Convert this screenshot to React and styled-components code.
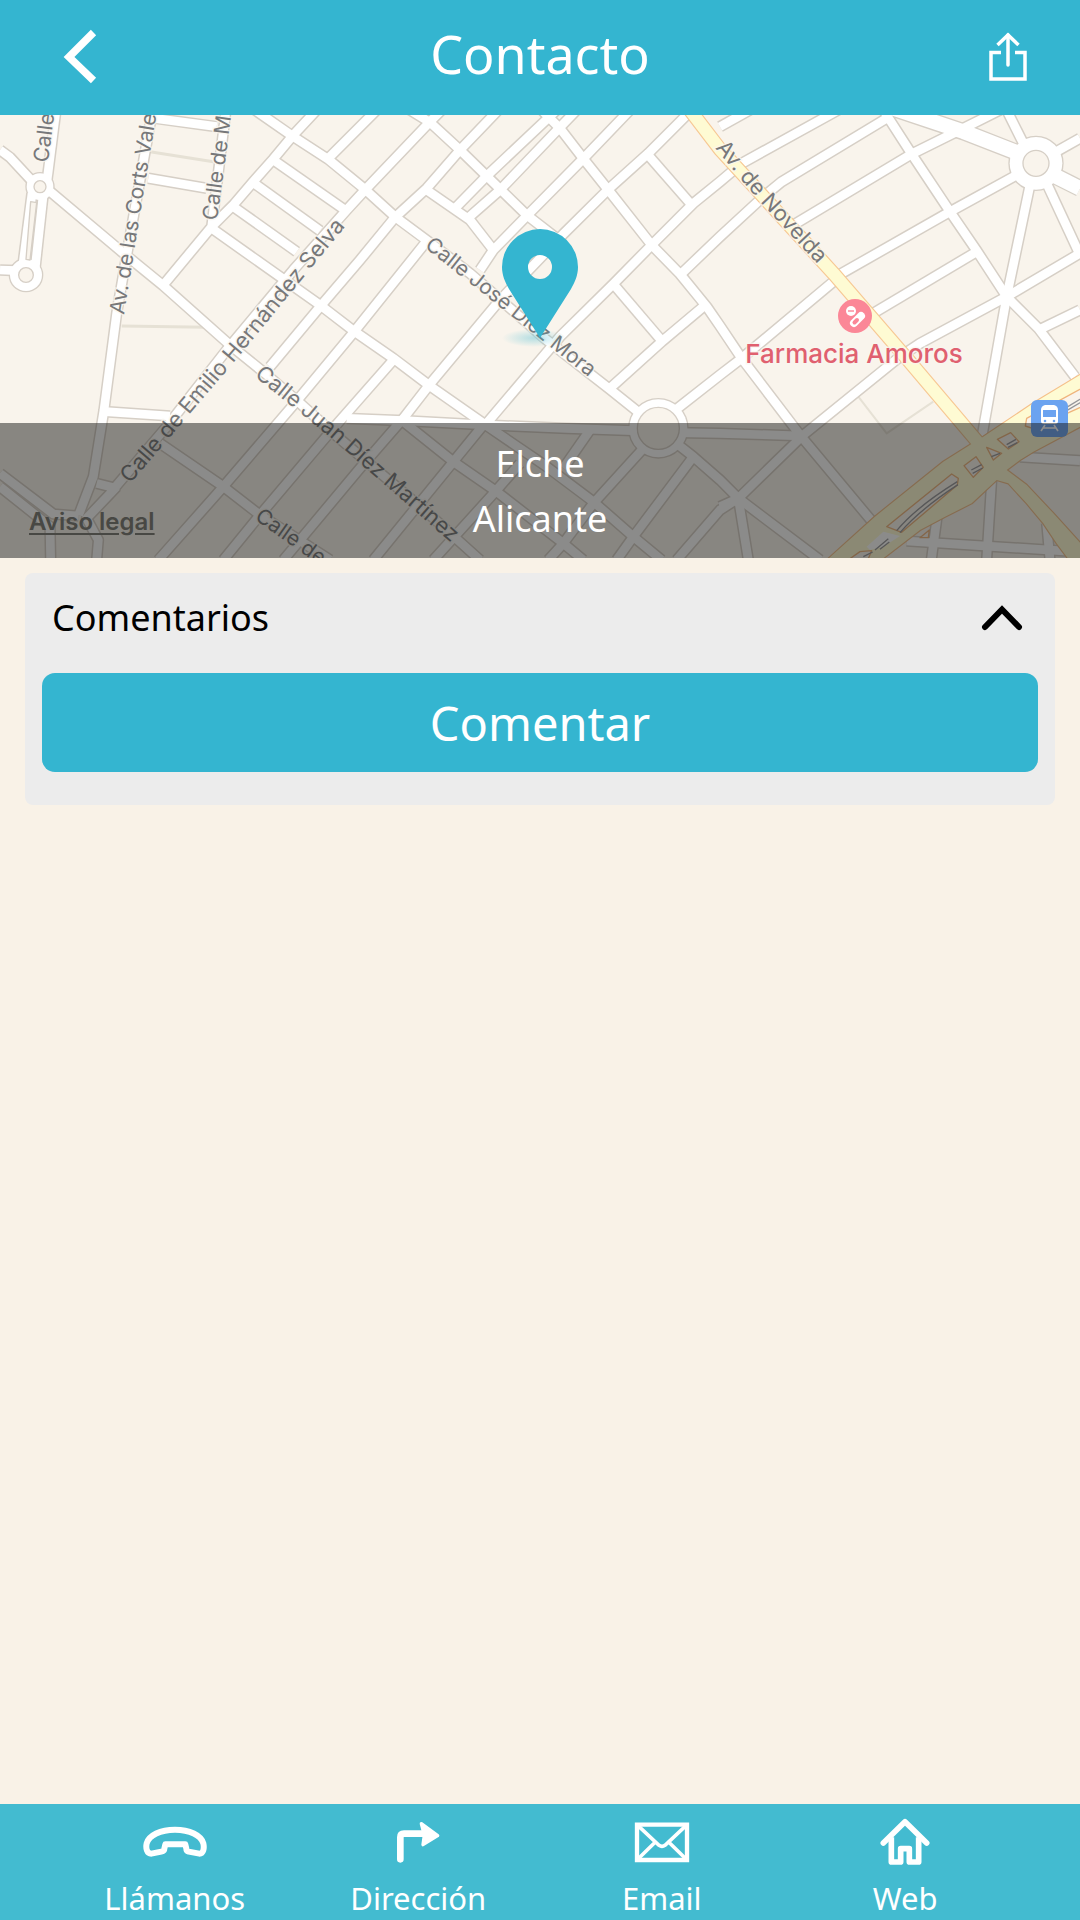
import React, { useState } from 'react';
import styled, { createGlobalStyle } from 'styled-components';

const TEAL = '#34b5d0';
const SANS = '"Noto Sans", "Open Sans", sans-serif';
const MAP_SANS = 'Inter, Roboto, sans-serif';

const GlobalStyle = createGlobalStyle`
  *, *::before, *::after { box-sizing: border-box; }
  body { margin: 0; background: #f9f2e7; font-family: ${SANS}; }
  button { font-family: inherit; border: 0; padding: 0; cursor: pointer; }
`;

const Page = styled.div`
  min-height: 100vh;
  display: flex;
  flex-direction: column;
  background: #f9f2e7;
`;

const Header = styled.header`
  display: grid;
  grid-template-columns: 1fr auto 1fr;
  align-items: center;
  height: 115px;
  padding: 0 52px 2px;
  background: ${TEAL};
  color: #fff;
`;

const Title = styled.h1`
  margin: 0;
  padding-bottom: 6px;
  font-size: 52px;
  line-height: 70px;
  font-weight: 400;
`;

const IconButton = styled.button`
  display: flex;
  justify-self: ${(p) => p.$side};
  color: inherit;
  background: none;
`;

const MapPanel = styled.section`
  position: relative;
`;

const MapDrawing = styled.svg`
  display: block;
  width: 100%;
  height: auto;
`;

const StreetLabel = styled.text`
  font-family: ${MAP_SANS};
  font-size: ${(p) => (p.$long ? 22 : 21)}px;
  fill: #77787a;
  stroke: #faf6ef;
  stroke-width: 3px;
  stroke-opacity: 0.75;
  paint-order: stroke;
`;

const PlaceLabel = styled.text`
  font-family: ${MAP_SANS};
  font-size: 26px;
  font-weight: 500;
  fill: #e0606f;
  stroke: #faf6ef;
  stroke-width: 3px;
  stroke-opacity: 0.75;
  paint-order: stroke;
  text-anchor: middle;
`;

const PlaceBar = styled.div`
  position: absolute;
  left: 0;
  right: 0;
  bottom: 0;
  padding: 13px 0 12px;
  background: rgba(24, 24, 22, 0.5);
  color: #fff;
  font-size: 36px;
  line-height: 55px;
  text-align: center;
`;

const LegalLink = styled.a`
  position: absolute;
  left: 29px;
  bottom: 22px;
  font-family: ${MAP_SANS};
  font-size: 24px;
  line-height: 28px;
  font-weight: 600;
  color: #484844;
  text-decoration: underline;
  text-underline-offset: 3px;
`;

const Main = styled.main`
  padding: 15px 25px;
`;

const Card = styled.section`
  padding: 0 17px 33px;
  border-radius: 8px;
  background: #ececec;
`;

const CardToggle = styled.button`
  display: flex;
  align-items: center;
  justify-content: space-between;
  width: 100%;
  height: 100px;
  padding: 0 14px 10px 10px;
  background: none;
  color: #000;
  font-size: 36px;
  line-height: 50px;
`;

const PrimaryButton = styled.button`
  display: block;
  width: 100%;
  height: 99px;
  border-radius: 13px;
  background: ${TEAL};
  color: #fff;
  font-size: 47px;
  line-height: 64px;
`;

const TabBar = styled.nav`
  display: grid;
  grid-template-columns: repeat(4, 1fr);
  margin-top: auto;
  padding: 14px 53px 1px;
  background: #43bbd0;
`;

const Tab = styled.a`
  display: flex;
  flex-direction: column;
  align-items: center;
  gap: 11px;
  color: #fff;
  font-size: 31px;
  line-height: 42px;
  text-decoration: none;
`;

/* Street geometry, in thirds of a map unit. */
const lanes = [
  'M168 0 L140 220', 'M0 120 L30 142 L95 212', 'M96 250 L68 470', 'M130 250 L106 470', 'M0 480 L50 482',
  'M145 240 L365 425 L490 527 L690 705 L795 790 L900 880 L1000 970 L1290 1215 L1440 1350',
  'M458 0 L395 350 L350 610 L312 900 L280 1100 L236 1215',
  'M678 0 L635 350 L490 525', 'M635 350 L700 285 L760 215 L820 147 L880 75 L950 0',
  'M765 0 L880 80 L985 148 L1095 238 L1185 320 L1290 398 L1410 490 L1640 690 L1830 838 L1920 910',
  'M820 150 L1035 300', 'M760 218 L960 362', 'M700 290 L890 425',
  'M635 355 L960 585 L1060 662 L1180 745 L1290 828 L1450 940 L1640 1070 L1780 1175 L1900 1280 L1985 1350',
  'M330 1150 L500 950 L680 720 L880 480 L1040 300 L1095 240 L1290 35 L1325 0',
  'M985 145 L1130 0', 'M810 770 L960 590 L1080 450 L1185 322 L1280 235 L1380 120 L1495 0',
  'M475 1350 L670 1130 L880 885 L1060 668 L1275 400',
  'M670 1350 L780 1215 L1000 955 L1180 750', 'M850 1350 L1080 1075 L1210 925 L1290 822 L1500 570 L1690 372 L1825 238 L1945 130 L2075 0',
  'M1440 480 L1480 420 L1580 318 L1750 146 L1890 0',
  'M1460 940 L1680 680 L1840 522 L1955 405 L2080 280 L2160 215 L2225 160 L2515 0',
  'M1230 0 L1290 37 L1380 120 L1460 198 L1580 315 L1690 400', 'M1280 240 L1410 330 L1480 420',
  'M1360 300 L1460 198 L1670 0', 'M1400 328 L1500 240 L1680 52 L1730 0',
  'M1625 0 L1680 55 L1750 146 L1825 240 L1955 405 L2040 492 L2120 590 L2160 648 L2225 745 L2400 975 L2625 1245',
  'M1940 130 L2075 285', 'M1840 522 L1985 692', 'M1830 835 L1985 695 L2110 590',
  'M2040 495 L2160 380 L2290 260 L2345 215 L2660 25', 'M2020 905 L2160 795 L2225 745 L2500 515',
  'M2380 345 L2735 132 L2880 60 L3000 0', 'M2520 493 L2850 305 L3050 195', 'M2620 610 L2930 425',
  'M2160 1190 L2215 1165 L2410 975 L2700 740 L2760 700 L3020 560 L3240 430',
  'M2160 50 L2250 0', 'M2650 0 L2735 132 L2850 305 L2930 422 L3020 560 L3115 655 L3225 800',
  'M3120 658 L3240 600', 'M3090 225 L3020 560 L2945 985', 'M3020 0 L3075 110',
  'M3160 130 L3240 85', 'M3140 220 L3240 435',
  'M1040 925 L1210 932 L1460 945 L1700 955 L1900 962', 'M2030 968 L2160 970 L2410 978',
  'M1210 935 L1360 1055 L1490 1145 L1690 1300 L1750 1350', 'M1120 1350 L1360 1055 L1450 945',
  'M1300 1350 L1490 1140 L1560 1060', 'M1770 960 L1690 1075', 'M1930 1015 L1780 1180 L1690 1300 L1645 1350',
  'M2080 1040 L1900 1280 L1850 1350', 'M2010 985 L2080 1040 L2160 1110 L2215 1165 L2460 1350',
  'M2030 1350 L2160 1200 L2215 1165 L2245 1350',
  'M0 1090 L160 1212 L236 1218', 'M0 1130 L150 1250 L152 1350', 'M290 1120 L350 1135', 'M350 1130 L260 1225 L295 1290 L290 1350',
  'M445 205 L620 235', 'M465 25 L650 50', 'M316 905 L510 918', 'M480 1000 L670 1130 L780 1215 L990 1350',
  'M2975 1110 L2960 1350', 'M2812 1215 L2794 1350', 'M2720 1293 L3240 1326', 'M3060 1041 L3240 1052', 'M3140 1240 L3150 1350',
];

const avenues = ['M2680 -5 L2890 65 L3070 135', 'M3150 190 L3240 235'];

const novelda = 'M2070 0 L2160 118 L2500 490 L2720 745 L2945 1010';

const motorway =
  'M3250 789 L3100 880 L2950 980 L2905 1008 L2830 1055 L2625 1220 L2490 1342 L2470 1360 L2630 1360 L2760 1260 L2835 1220 L2915 1180 L2990 1110 L3025 1120 L3080 1180 L3130 1240 L3170 1300 L3215 1360 L3260 1360 L3260 1320 L3160 1210 L3080 1125 L3020 1080 L3060 1050 L3100 1025 L3260 940 Z';

const roundabouts = [
  { x: 120, y: 230, r: 18, ring: 22 },
  { x: 78, y: 495, r: 22, ring: 26 },
  { x: 1975, y: 955, r: 63, ring: 24 },
  { x: 3108, y: 160, r: 39, ring: 40 },
];

const labels = [
  { id: 'calle', d: 'M48 163 L56 100', text: 'Calle' },
  { id: 'corts', d: 'M124 315 L138 227 L162 80', text: 'Av. de las Corts Vale' },
  { id: 'callem', d: 'M217 221 L234 95', text: 'Calle de M' },
  { id: 'emilio', d: 'M130 484 L240 355 L362 206', text: 'Calle de Emilio Hernández Selva', long: true },
  { id: 'juan', d: 'M254 376 L330 437 L480 568', text: 'Calle Juan Díez Martínez', long: true },
  { id: 'jose', d: 'M424 247 L620 402', text: 'Calle José Díez Mora' },
  { id: 'called', d: 'M254 519 L360 594', text: 'Calle de' },
  { id: 'novelda', d: 'M715 148 L760 202 L840 288', text: 'Av. de Novelda', long: true },
];

function CityMap() {
  return (
    <MapDrawing viewBox="0 115 1080 443" role="img" aria-label="Mapa de Elche, Alicante">
      <rect y="115" width="1080" height="443" fill="#f9f4ec" />
      <g transform="translate(0 110) scale(0.33333)" fill="none" strokeLinejoin="round">
        <g stroke="#e6e1d5" strokeWidth="9">
          <path d="M450 125 L640 155 M365 648 L620 652" />
          <path d="M2575 860 L2660 970 L2800 875" strokeWidth="6" />
        </g>
        <g stroke="#d6cfc6">
          {lanes.map((d) => <path key={d} d={d} strokeWidth="35" />)}
          {avenues.map((d) => <path key={d} d={d} strokeWidth="52" />)}
          {roundabouts.map((c) => <circle key={c.x} cx={c.x} cy={c.y} r={c.r + c.ring / 2} strokeWidth={c.ring + 8} />)}
        </g>
        <g stroke="#ffffff">
          {lanes.map((d) => <path key={d} d={d} strokeWidth="26" />)}
          {avenues.map((d) => <path key={d} d={d} strokeWidth="44" />)}
        </g>
        {roundabouts.map((c) => (
          <g key={c.x}>
            <circle cx={c.x} cy={c.y} r={c.r + c.ring} fill="#fff" />
            <circle cx={c.x} cy={c.y} r={c.r} fill="#f9f4ec" stroke="#d6cfc6" strokeWidth="4" />
          </g>
        ))}
        <path d="M92 275 L110 278 L90 450 L78 448 Z" fill="#f9f4ec" stroke="#d6cfc6" strokeWidth="4" />
        <path d={motorway} stroke="#f5c08a" strokeWidth="7" />
        <path d={novelda} stroke="#f7c894" strokeWidth="44" />
        <path d={motorway} fill="#fefbd3" />
        <path d={novelda} stroke="#fefbd3" strokeWidth="37" />
        <g fill="#f9f4ec" stroke="#efb47c" strokeWidth="4">
          <path d="M2660 1250 L2855 1092 L2875 1105 L2872 1125 L2705 1267 Z" />
          <path d="M2892 1067 L2928 1040 L2950 1072 L2920 1102 Z" />
          <path d="M2960 1012 L3005 1030 L2980 1050 Z" />
          <path d="M2992 988 L3032 968 L3057 995 L3025 1017 Z" />
          <path d="M3250 832 L3080 925 L3076 948 L3100 956 L3250 888 Z" />
          <path d="M2550 1346 L2580 1325 L2615 1322 L2605 1346 Z" />
          <path d="M2760 1283 L2788 1260 L2785 1283 Z" />
        </g>
        <path d="M2600 1310 L2650 1265 L2700 1278 L2650 1310 L2610 1320 Z" fill="#fff" />
        <g stroke="#96969a" strokeWidth="4">
          <path d="M2690 1262 Q2750 1190 2872 1115 M2700 1268 Q2760 1198 2874 1124" />
          <path d="M2914 1080 L2945 1064 M2918 1090 L2948 1074 M2974 1040 L3000 1030" />
          <path d="M3020 1004 L3048 988 M3024 1012 L3052 998 M3195 895 L3250 862 M3200 902 L3250 872" />
          <path d="M2625 1320 L2665 1286 M2640 1318 L2668 1296 M2590 1340 L2618 1326" />
        </g>
      </g>
      <defs>
        {labels.map((l) => <path key={l.id} id={`street-${l.id}`} d={l.d} />)}
        <radialGradient id="pin-shade">
          <stop offset="0" stopColor={TEAL} stopOpacity="0.35" />
          <stop offset="1" stopColor={TEAL} stopOpacity="0" />
        </radialGradient>
      </defs>
      {labels.map((l) => (
        <StreetLabel key={l.id} $long={l.long}>
          <textPath href={`#street-${l.id}`}>{l.text}</textPath>
        </StreetLabel>
      ))}
      <circle cx="855" cy="316" r="17" fill="#fb8797" />
      <circle cx="851" cy="311" r="5" fill="#fff" />
      <path d="M848 311 H854" stroke="#fb8797" strokeWidth="1.4" />
      <path d="M854 323 L861 316" stroke="#fff" strokeWidth="8" strokeLinecap="round" />
      <path d="M854.5 322.5 L857 320" stroke="#fb8797" strokeWidth="4" strokeLinecap="round" />
      <PlaceLabel x="854" y="363">Farmacia Amoros</PlaceLabel>
      <rect x="1031" y="400" width="37" height="37" rx="6" fill="#6ba3f0" />
      <path d="M1045 405 H1054 Q1058 406 1058 410 V421 Q1058 424 1055 424 H1044 Q1041 424 1041 421 V410 Q1041 406 1045 405 Z" fill="#fff" />
      <path d="M1043 410 H1056 V417 H1043 Z" fill="#6ba3f0" />
      <circle cx="1045" cy="421" r="1.3" fill="#6ba3f0" />
      <circle cx="1054" cy="421" r="1.3" fill="#6ba3f0" />
      <path d="M1045 425 L1041 431 M1054 425 L1058 431 M1043 428 H1056" stroke="#fff" strokeWidth="1.6" />
      <ellipse cx="534" cy="338" rx="32" ry="9" fill="url(#pin-shade)" />
      <path
        fillRule="evenodd"
        fill={TEAL}
        d="M540 338 L509 289 C505 282 502 275 502 267 A38 38 0 0 1 578 267 C578 275 575 282 571 289 Z M540 255 A12 12 0 1 0 540 279 A12 12 0 1 0 540 255 Z"
      />
    </MapDrawing>
  );
}

const BackIcon = () => (
  <svg width="56" height="56" viewBox="-6 0 56 56" aria-hidden="true">
    <path d="M35.500 3.500 L11 28 L35.500 51.500" fill="none" stroke="currentColor" strokeWidth="7.500" />
  </svg>
);

const ShareIcon = () => (
  <svg width="40" height="50" viewBox="0 0 40 50" fill="none" stroke="currentColor" strokeWidth="3.500" aria-hidden="true">
    <path d="M13 20.500 H3 V47 H37 V20.500 H27" />
    <path d="M20 33 V3" strokeLinecap="round" />
    <path d="M9.500 13 L20 3 L30.500 13" />
  </svg>
);

const ChevronIcon = ({ open }) => (
  <svg width="44" height="30" viewBox="0 0 44 30" aria-hidden="true">
    <path
      d={open ? 'M5 24 L22 6.500 L39 24' : 'M5 6 L22 23.500 L39 6'}
      fill="none"
      stroke="currentColor"
      strokeWidth="6"
      strokeLinecap="round"
    />
  </svg>
);

const TabIcon = ({ children }) => (
  <svg width="64" height="48" viewBox="0 0 192 144" fill="none" stroke="currentColor" strokeWidth="15" aria-hidden="true">
    {children}
  </svg>
);

const tabs = [
  {
    label: 'Llámanos',
    href: '#llamanos',
    icon: (
      <TabIcon>
        <path strokeWidth="18" strokeLinejoin="round" d="M96 35 C140 35 174 52 181 76 C184 90 182 107 169 107 L137 101 Q130 99 130 92 L127 79 H67 L64 92 Q64 99 55 101 L25 107 C11 107 8 90 11 76 C18 52 52 35 96 35 Z" />
      </TabIcon>
    ),
  },
  {
    label: 'Dirección',
    href: '#direccion',
    icon: (
      <TabIcon>
        <path strokeWidth="20" strokeLinecap="round" strokeLinejoin="round" d="M43 124 V58 Q43 47 54 47 H110" />
        <path fill="currentColor" strokeWidth="10" strokeLinejoin="round" d="M106 17 L155 53 L111 80 L115 52 Z" />
      </TabIcon>
    ),
  },
  {
    label: 'Email',
    href: '#email',
    icon: (
      <TabIcon>
        <path strokeWidth="13" d="M21 20 H171 V126 H21 Z" />
        <path strokeWidth="11" d="M24 23 L87 82 Q96 88 105 82 L168 23 M24 123 L73 75 M168 123 L119 75" />
      </TabIcon>
    ),
  },
  {
    label: 'Web',
    href: '#web',
    icon: (
      <TabIcon>
        <path strokeWidth="17" strokeLinecap="round" strokeLinejoin="round" d="M31 75 L96 11 L161 75" />
        <path strokeWidth="17" strokeLinejoin="round" d="M55 58 V132 H83 V92 H109 V132 H137 V58" />
      </TabIcon>
    ),
  },
];

export default function App() {
  const [open, setOpen] = useState(true);
  return (
    <Page>
      <GlobalStyle />
      <Header>
        <IconButton $side="start" aria-label="Volver"><BackIcon /></IconButton>
        <Title>Contacto</Title>
        <IconButton $side="end" aria-label="Compartir"><ShareIcon /></IconButton>
      </Header>
      <MapPanel>
        <CityMap />
        <PlaceBar>
          <div>Elche</div>
          <div>Alicante</div>
          <LegalLink href="#legal">Aviso legal</LegalLink>
        </PlaceBar>
      </MapPanel>
      <Main>
        <Card>
          <CardToggle aria-expanded={open} onClick={() => setOpen(!open)}>
            <span>Comentarios</span>
            <ChevronIcon open={open} />
          </CardToggle>
          {open && <PrimaryButton>Comentar</PrimaryButton>}
        </Card>
      </Main>
      <TabBar>
        {tabs.map((tab) => (
          <Tab key={tab.label} href={tab.href}>
            {tab.icon}
            {tab.label}
          </Tab>
        ))}
      </TabBar>
    </Page>
  );
}
